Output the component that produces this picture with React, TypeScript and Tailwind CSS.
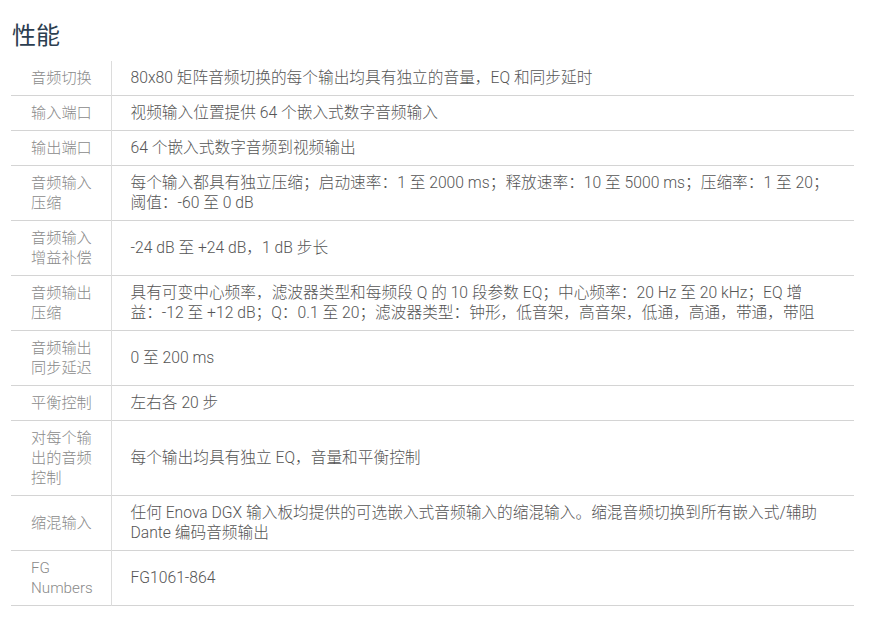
const rows: [string, string][] = [
  ['音频切换', '80x80 矩阵音频切换的每个输出均具有独立的音量，EQ 和同步延时'],
  ['输入端口', '视频输入位置提供 64 个嵌入式数字音频输入'],
  ['输出端口', '64 个嵌入式数字音频到视频输出'],
  ['音频输入压缩', '每个输入都具有独立压缩；启动速率：1 至 2000 ms；释放速率：10 至 5000 ms；压缩率：1 至 20；阈值：-60 至 0 dB'],
  ['音频输入增益补偿', '-24 dB 至 +24 dB，1 dB 步长'],
  ['音频输出压缩', '具有可变中心频率，滤波器类型和每频段 Q 的 10 段参数 EQ；中心频率：20 Hz 至 20 kHz；EQ 增益：-12 至 +12 dB；Q：0.1 至 20；滤波器类型：钟形，低音架，高音架，低通，高通，带通，带阻'],
  ['音频输出同步延迟', '0 至 200 ms'],
  ['平衡控制', '左右各 20 步'],
  ['对每个输出的音频控制', '每个输出均具有独立 EQ，音量和平衡控制'],
  ['缩混输入', '任何 Enova DGX 输入板均提供的可选嵌入式音频输入的缩混输入。缩混音频切换到所有嵌入式/辅助 Dante 编码音频输出'],
  ['FG Numbers', 'FG1061-864'],
];

export default function App() {
  return (
    <div
      className="min-h-screen bg-white pl-[11px] pr-[22px] pt-[20px]"
      style={{ fontFamily: 'Roboto, "Noto Sans CJK SC", sans-serif' }}
    >
      <h2 className="text-[24px] leading-[32px] text-[#2c3e50] font-normal ml-[1px]">性能</h2>
      <table className="mt-[9px] w-full border-collapse leading-[20px] font-light">
        <tbody>
          {rows.map(([label, value]) => (
            <tr key={label} className="border-b border-[#d4d4d4]">
              <td className="w-[100px] border-r border-[#dcdcdc] pl-[20px] pr-[14px] py-[7px] align-middle text-[15.2px] text-[#8a8a8a]">
                {label}
              </td>
              <td className="pl-[19px] pr-[20px] py-[7px] align-middle text-[15.7px] text-[#555555]">{value}</td>
            </tr>
          ))}
        </tbody>
      </table>
    </div>
  );
}
